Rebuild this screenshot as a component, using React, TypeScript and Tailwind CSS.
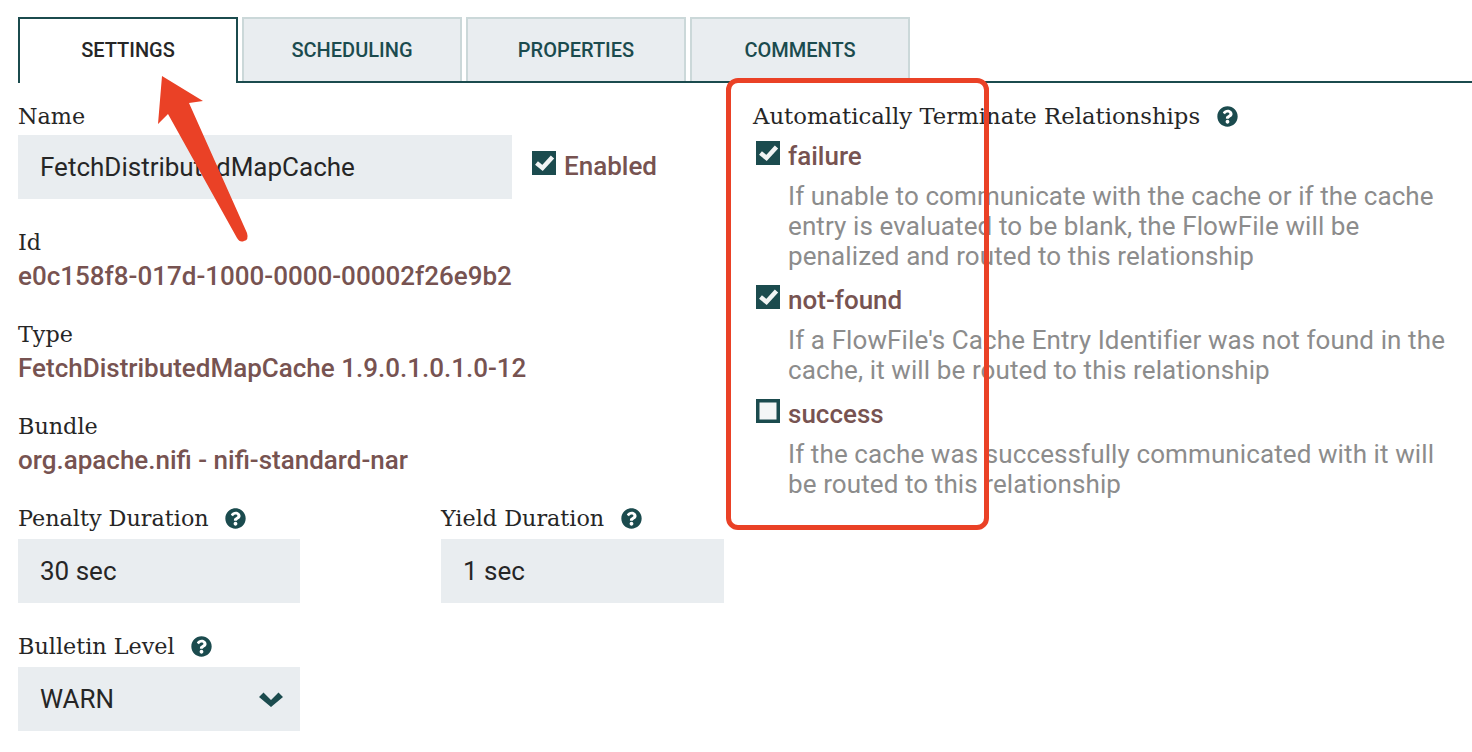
import { FaQuestionCircle } from 'react-icons/fa';

const sans = 'font-[Roboto,sans-serif]';
const slab = "font-['DejaVu_Serif',serif]";

function Help() {
  return <FaQuestionCircle className="ml-[16.5px] shrink-0 text-[#1b4b4e]" size={21} />;
}

function Check({ checked }: { checked: boolean }) {
  return (
    <svg width="24" height="24" viewBox="0 0 24 24" className="shrink-0">
      <rect width="24" height="24" fill="#1b4b4e" />
      {checked ? (
        <path d="M4.5 12 L10.5 17 L20.5 6" fill="none" stroke="#f1f4f4" strokeWidth="4.5" />
      ) : (
        <rect x="3.5" y="3.5" width="17" height="17" fill="#f4f6f6" />
      )}
    </svg>
  );
}

function Label({ text, help, className = '' }: { text: string; help?: boolean; className?: string }) {
  return (
    <div className={`flex items-center leading-[30px] text-[#262626] ${slab} ${className}`}>
      {text}
      {help && <Help />}
    </div>
  );
}

function Field({ label, value }: { label: string; value: string }) {
  return (
    <div className="h-[92px]">
      <Label text={label} className="h-[36px] pb-[2px] text-[22.3px]" />
      <div className="text-[26px] font-medium leading-[30px] text-[#775351]">{value}</div>
    </div>
  );
}

function Relationship({ name, checked, lines }: { name: string; checked: boolean; lines: string[] }) {
  return (
    <div className="mb-[14px]">
      <div className="flex h-[30px] items-center gap-2">
        <div className="-mt-[6px] ml-[3px]">
          <Check checked={checked} />
        </div>
        <span className="text-[26px] font-medium text-[#775351]">{name}</span>
      </div>
      <div className="mt-[10px] pl-[35px] text-[26px] leading-[30px] tracking-[0.1px] text-[#8c8c8c]">
        {lines.map((line) => (
          <div key={line}>{line}</div>
        ))}
      </div>
    </div>
  );
}

const tabs = ['SETTINGS', 'SCHEDULING', 'PROPERTIES', 'COMMENTS'];

export default function App() {
  return (
    <div className={`relative h-[752px] w-[1472px] overflow-hidden bg-white ${sans}`}>
      {/* Tabs */}
      <div className="ml-[18px] mt-[17px] flex h-[66px] gap-1 border-b-2 border-[#1b4b4e]">
        {tabs.map((tab, i) => (
          <div
            key={tab}
            className={
              i === 0
                ? 'flex h-[66px] w-[220px] items-center justify-center border-2 border-b-0 border-[#1b4b4e] bg-white pb-[3px] text-[20px] font-medium text-[#262626]'
                : 'flex h-[64px] w-[220px] items-center justify-center border-2 border-b-0 border-[#cbd8d9] bg-[#e9edf0] pb-[1px] text-[20px] font-medium text-[#1b4b4e]'
            }
          >
            {tab}
          </div>
        ))}
      </div>

      <div className="flex">
        {/* Left column */}
        <div className="ml-[18px] w-[706px] pt-[16px]">
          <Label text="Name" className="h-[36px] pb-[2px] text-[22.3px]" />
          <div className="flex items-center">
            <div className="flex h-[64px] w-[494px] items-center bg-[#e9edf0] pl-[22px] text-[26px] text-[#262626]">
              FetchDistributedMapCache
            </div>
            <div className="ml-5 -mt-[8px]">
              <Check checked />
            </div>
            <span className="ml-2 -mt-px text-[26px] font-medium text-[#775351]">Enabled</span>
          </div>
          <div className="mt-[26px]">
            <Field label="Id" value="e0c158f8-017d-1000-0000-00002f26e9b2" />
            <Field label="Type" value="FetchDistributedMapCache 1.9.0.1.0.1.0-12" />
            <Field label="Bundle" value="org.apache.nifi - nifi-standard-nar" />
          </div>
          <div className="flex justify-between">
            <div className="w-[282px]">
              <Label text="Penalty Duration" help className="h-[38px] pb-[4px] text-[22.3px]" />
              <div className="flex h-[64px] items-center bg-[#e9edf0] pl-[22px] text-[26px] text-[#262626]">30 sec</div>
            </div>
            <div className="w-[283px]">
              <Label text="Yield Duration" help className="h-[38px] pb-[4px] text-[22.3px]" />
              <div className="flex h-[64px] items-center bg-[#e9edf0] pl-[22px] text-[26px] text-[#262626]">1 sec</div>
            </div>
          </div>
          <div className="mt-[26px] w-[282px]">
            <Label text="Bulletin Level" help className="h-[38px] pb-[4px] text-[22.3px]" />
            <div className="flex h-[64px] items-center justify-between bg-[#e9edf0] pl-[22px] pr-[17px] text-[26px] text-[#262626]">
              WARN
              <svg width="24" height="15" viewBox="0 0 24 15" className="mt-px">
                <path d="M0 5 L4.5 0.5 L12 8 L19.5 0.5 L24 5 L12 15 Z" fill="#1b4b4e" />
              </svg>
            </div>
          </div>
        </div>

        {/* Relationships */}
        <div className="ml-[29px] pt-[16px]">
          <Label text="Automatically Terminate Relationships" help className="h-[36px] pb-[2px] text-[22.75px]" />
          <div className="mt-[6px]">
            <Relationship
              name="failure"
              checked
              lines={[
                'If unable to communicate with the cache or if the cache',
                'entry is evaluated to be blank, the FlowFile will be',
                'penalized and routed to this relationship',
              ]}
            />
            <Relationship
              name="not-found"
              checked
              lines={[
                "If a FlowFile's Cache Entry Identifier was not found in the",
                'cache, it will be routed to this relationship',
              ]}
            />
            <Relationship
              name="success"
              checked={false}
              lines={['If the cache was successfully communicated with it will', 'be routed to this relationship']}
            />
          </div>
        </div>
      </div>

      {/* Annotations */}
      <div className="absolute left-[726px] top-[78px] h-[452px] w-[263px] rounded-[12px] border-[5px] border-[#ea4126]" />
      <svg className="absolute left-0 top-0" width="300" height="260" viewBox="0 0 300 260">
        <path
          d="M162 76 L203 101 L189 103 L247 233 Q249 240 244 241 Q240 243 237 238 L168 114 L158 124 Z"
          fill="#ea4126"
        />
      </svg>
    </div>
  );
}
